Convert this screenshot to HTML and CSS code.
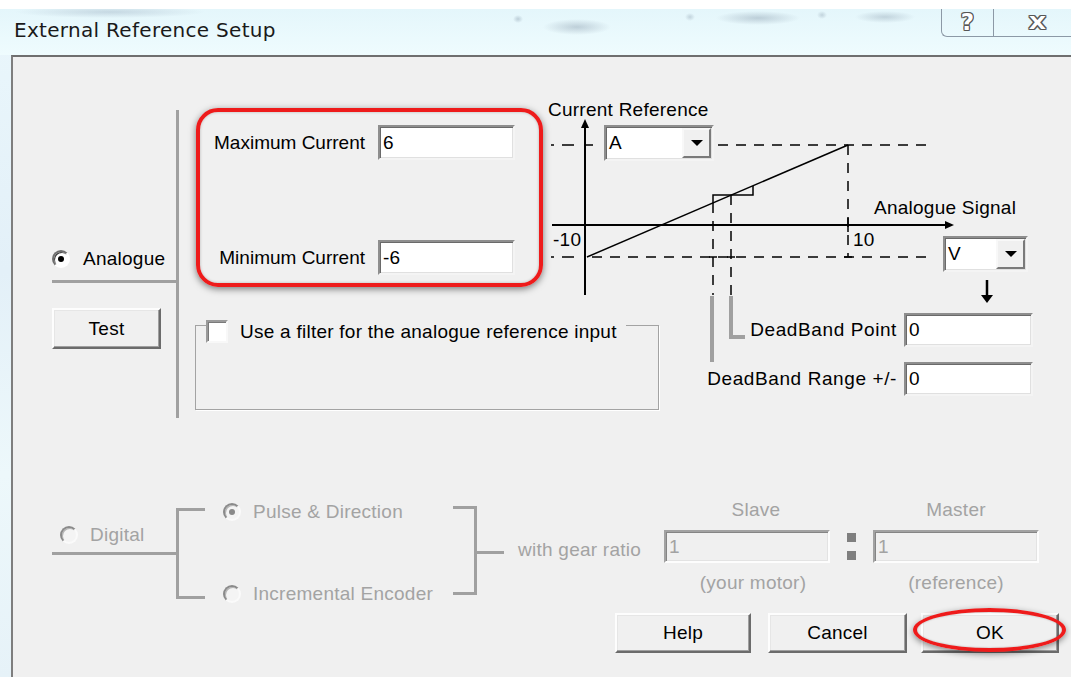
FILE: index.html
```html
<!DOCTYPE html>
<html lang="en">
<head>
<meta charset="utf-8">
<title>External Reference Setup</title>
<link rel="stylesheet" href="styles.css">
</head>
<body>
<div class="screen">
  <header class="titlebar">
    <h1 class="title">External Reference Setup</h1>
    <div class="caption-buttons">
      <span class="cap cap-help">?</span>
      <span class="cap cap-close">X</span>
    </div>
  </header>

  <main class="dialog">
    <section class="analogue">
      <div class="mode">
        <div class="choice"><span class="radio on"></span><span>Analogue</span></div>
        <div class="hbar"></div>
        <button class="btn btn-test" type="button">Test</button>
      </div>
      <div class="vbar"></div>

      <div class="analogue-body">
        <div class="top-row">
          <div class="limits">
            <span class="lbl">Maximum Current</span><span class="field">6</span>
            <span class="lbl">Minimum Current</span><span class="field">-6</span>
          </div>

          <div class="chart">
            <svg class="chart-lines" width="490" height="270" viewBox="0 0 490 270">
              <g fill="none" stroke="#000">
                <path d="M37 26V195" stroke-width="2"/>
                <path d="M4 125H399" stroke-width="2"/>
                <path d="M39 157L300 45" stroke-width="1.5"/>
                <path d="M165 103V95H205V86" stroke-width="1.5"/>
                <path d="M3 45H6M14 45H26M37 45H45M3 157H6M14 157H26" stroke-width="1.5"/>
                <path d="M300 118V132M296 157H304M161 157H169M179 157H187" stroke-width="1.5"/>
              </g>
              <g fill="none" stroke="#000" stroke-width="1.5" stroke-dasharray="10 8">
                <path d="M170 45H382"/>
                <path d="M44 157H382"/>
                <path d="M300 45V157"/>
                <path d="M165 103V195"/>
                <path d="M183 95V195"/>
              </g>
              <polygon points="37,19 33,28 41,28" fill="#000"/>
              <polygon points="406,125 397,121 397,129" fill="#000"/>
              <g fill="none" stroke="#a0a0a0" stroke-width="4">
                <path d="M164 196V262"/>
                <path d="M183 196V237H197"/>
              </g>
              <path d="M439 180V197" stroke="#000" stroke-width="2.5"/>
              <polygon points="433,195 445,195 439,203" fill="#000"/>
            </svg>
            <span class="chart-text cr-label">Current Reference</span>
            <span class="chart-text min-label">-10</span>
            <span class="chart-text max-label">10</span>
            <span class="chart-text signal-label">Analogue Signal</span>
            <div class="combo combo-a"><span class="value">A</span><span class="drop"><i></i></span></div>
            <div class="combo combo-v"><span class="value">V</span><span class="drop"><i></i></span></div>
          </div>
        </div>

        <div class="bottom-row">
          <div class="filter">
            <div class="filter-title"><span class="check"></span><span>Use a filter for the analogue reference input</span></div>
          </div>
          <div class="deadband">
            <span class="lbl">DeadBand Point</span><span class="field">0</span>
            <span class="lbl">DeadBand Range +/-</span><span class="field">0</span>
          </div>
        </div>
      </div>
    </section>

    <section class="digital">
      <div class="mode mode-digital">
        <div class="choice choice-digital"><span class="radio dim"></span><span class="muted">Digital</span></div>
        <div class="hbar"></div>
      </div>
      <div class="bracket-l"></div>
      <div class="options">
        <div class="choice"><span class="radio dim on"></span><span class="muted">Pulse &amp; Direction</span></div>
        <div class="choice"><span class="radio dim"></span><span class="muted">Incremental Encoder</span></div>
      </div>
      <div class="bracket-r"></div>
      <div class="connector"></div>
      <div class="gear-label muted">with gear ratio</div>
      <div class="gear">
        <span class="gear-head muted slave-head">Slave</span>
        <span></span>
        <span class="gear-head muted">Master</span>
        <span class="field field-off">1</span>
        <span class="colon"><i></i><i></i></span>
        <span class="field field-off">1</span>
        <span class="gear-head muted slave-sub">(your motor)</span>
        <span></span>
        <span class="gear-head muted">(reference)</span>
      </div>
    </section>

    <footer class="actions">
      <button class="btn btn-help" type="button">Help</button>
      <button class="btn btn-cancel" type="button">Cancel</button>
      <button class="btn btn-ok" type="button">OK<span class="ok-mark"></span></button>
    </footer>
  </main>
</div>
</body>
</html>
```

FILE: styles.css
```css
* {
  box-sizing: border-box;
}

html,
body {
  margin: 0;
  padding: 0;
}

body {
  width: 1071px;
  height: 677px;
  overflow: hidden;
  background: #fff;
  font-family: "Liberation Sans", Arial, sans-serif;
  font-size: 19px;
  letter-spacing: 0.25px;
  color: #000;
}

.screen {
  width: 1071px;
  height: 677px;
  padding-top: 9px;
  display: flex;
  flex-direction: column;
  background:
    linear-gradient(#fff 0 9px, transparent 9px),
    linear-gradient(180deg, #eaf7fc 0%, #e3f0f8 40%, #edf8fb 70%, #e6f2f8 100%);
}

/* ---------- caption bar ---------- */
.titlebar {
  flex: none;
  height: 46px;
  display: flex;
  align-items: flex-start;
  background:
    radial-gradient(ellipse 95px 6px at 110px 3px, rgba(140, 160, 180, 0.35), transparent),
    radial-gradient(ellipse 34px 8px at 577px 18px, rgba(110, 130, 150, 0.35), transparent),
    radial-gradient(ellipse 5px 4px at 518px 10px, rgba(110, 130, 150, 0.35), transparent),
    radial-gradient(ellipse 5px 4px at 690px 8px, rgba(110, 130, 150, 0.3), transparent),
    radial-gradient(ellipse 42px 7px at 758px 9px, rgba(110, 130, 150, 0.35), transparent),
    radial-gradient(ellipse 5px 4px at 822px 6px, rgba(110, 130, 150, 0.3), transparent),
    radial-gradient(ellipse 30px 6px at 885px 8px, rgba(110, 130, 150, 0.3), transparent),
    linear-gradient(180deg, #e4f6fb, #effcfe);
}

.title {
  margin: 0;
  padding: 9px 0 0 14px;
  font: 400 20px/24px "DejaVu Sans", "Noto Sans", sans-serif;
  letter-spacing: 0.3px;
  color: #1a1a1a;
}

.caption-buttons {
  margin-left: auto;
  margin-right: -10px;
  width: 140px;
  height: 28px;
  display: flex;
  border-left: 1px solid #8c99a6;
  border-bottom: 1px solid #8c99a6;
  border-bottom-left-radius: 6px;
}

.cap {
  display: flex;
  align-items: center;
  justify-content: center;
  font: 700 19px/1 "DejaVu Sans", sans-serif;
  color: #fff;
  text-shadow:
    1px 0 #555, -1px 0 #555, 0 1px #555, 0 -1px #555,
    1px 1px #666, -1px -1px #666, 1px -1px #666, -1px 1px #666;
}

.cap-help {
  width: 52px;
  font-size: 23px;
  border-right: 1px solid #8c99a6;
}

.cap-close {
  flex: 1;
  font-size: 18px;
  transform: scaleX(1.25);
}

/* ---------- dialog body ---------- */
.dialog {
  flex: 1;
  margin-left: 11px;
  border-left: 2px solid #7e7e7e;
  border-top: 2px solid #6f6f6f;
  background: #f0f0f0;
  display: flex;
  flex-direction: column;
}

.muted {
  color: #a3a3a3;
}

.choice {
  display: flex;
  align-items: center;
  gap: 13px;
  height: 23px;
  line-height: 22px;
  white-space: nowrap;
}

.radio {
  position: relative;
  flex: none;
  width: 18px;
  height: 18px;
  border-radius: 50%;
  border: 2px solid;
  border-color: #6e6e6e #ffffff #ffffff #6e6e6e;
  background: #fff;
  box-shadow: inset 1px 1px #404040;
}

.radio.on::after {
  content: "";
  position: absolute;
  left: 4px;
  top: 4px;
  width: 6px;
  height: 6px;
  border-radius: 50%;
  background: #000;
}

.radio.dim {
  border-color: #8a8a8a #fafafa #fafafa #8a8a8a;
  background: #f4f4f4;
  box-shadow: inset 1px 1px #b4b4b4;
}

.radio.dim.on::after {
  background: #8a8a8a;
}

.hbar {
  width: 124px;
  height: 3px;
  background: #a0a0a0;
}

.btn {
  font: inherit;
  letter-spacing: inherit;
  color: #000;
  height: 40px;
  padding: 0;
  background: #f0f0f0;
  border: 2px solid;
  border-color: #fdfdfd #6b6b6b #6b6b6b #fdfdfd;
  box-shadow: inset -1px -1px #a0a0a0, inset 1px 1px #e6e6e6;
}

.field {
  display: flex;
  align-items: center;
  height: 35px;
  padding-left: 3px;
  background: #fff;
  border: 2px solid;
  border-color: #8e8e8e #f4f4f4 #f4f4f4 #8e8e8e;
  box-shadow: inset 1px 1px #6a6a6a, inset -1px -1px #e0e0e0;
  line-height: 22px;
}

.field-off {
  height: 33px;
  background: #f0f0f0;
  color: #a3a3a3;
  border-color: #a2a2a2 #fdfdfd #fdfdfd #a2a2a2;
  box-shadow: inset 1px 1px #858585, inset -1px -1px #e3e3e3;
}

.lbl {
  text-align: right;
  white-space: nowrap;
  line-height: 22px;
}

/* ---------- analogue block ---------- */
.analogue {
  flex: none;
  display: flex;
  height: 318px;
  margin-top: 43px;
  padding-left: 39px;
}

.mode {
  flex: none;
  width: 124px;
  display: flex;
  flex-direction: column;
  align-items: flex-start;
  padding-top: 147px;
}

.mode .hbar {
  margin-top: 10px;
}

.btn-test {
  margin-top: 25px;
  width: 109px;
  height: 41px;
}

.vbar {
  flex: none;
  width: 3px;
  height: 308px;
  margin-top: 10px;
  background: #a0a0a0;
}

.analogue-body {
  display: flex;
  flex-direction: column;
}

.top-row {
  display: flex;
  height: 200px;
}

.limits {
  flex: none;
  width: 347px;
  height: 179px;
  margin: 8px 0 0 17px;
  padding: 13px 24px 0 0;
  border: 4px solid #ee1b1b;
  border-radius: 22px;
  box-shadow: 0 2px 7px rgba(0, 0, 0, 0.5), inset 0 0 3px rgba(0, 0, 0, 0.25);
  display: grid;
  grid-template-columns: 1fr 137px;
  column-gap: 13px;
  row-gap: 80px;
  align-content: start;
  align-items: center;
}

.limits .lbl {
  letter-spacing: 0;
}

/* response curve: axes, dead band and unit selectors */
.chart {
  position: relative;
  flex: none;
  width: 490px;
  height: 200px;
  margin-left: 5px;
}

.chart-lines {
  position: absolute;
  left: 0;
  top: 0;
  overflow: visible;
}

.chart-text {
  position: absolute;
  line-height: 20px;
  white-space: nowrap;
}

.cr-label {
  left: 0;
  top: 0;
}

.min-label {
  left: 5px;
  top: 130px;
}

.max-label {
  left: 305px;
  top: 130px;
}

.signal-label {
  left: 326px;
  top: 98px;
}

.combo {
  position: absolute;
  display: flex;
  height: 36px;
  background: #fff;
  border: 2px solid;
  border-color: #8e8e8e #f4f4f4 #f4f4f4 #8e8e8e;
  box-shadow: inset 1px 1px #6a6a6a, inset -1px -1px #e0e0e0;
}

.combo .value {
  flex: 1;
  padding-left: 3px;
  line-height: 32px;
}

.combo .drop {
  flex: none;
  width: 29px;
  margin: 1px 1px 1px 0;
  display: flex;
  align-items: center;
  justify-content: center;
  background: #f0f0f0;
  border: 2px solid;
  border-color: #f8f8f8 #7a7a7a #7a7a7a #f8f8f8;
}

.combo .drop i {
  width: 0;
  height: 0;
  border-left: 6px solid transparent;
  border-right: 6px solid transparent;
  border-top: 6px solid #000;
}

.combo-a {
  left: 56px;
  top: 25px;
  width: 110px;
}

.combo-v {
  left: 395px;
  top: 136px;
  width: 85px;
}

.bottom-row {
  display: flex;
  margin-top: 13px;
}

.filter {
  flex: none;
  width: 464px;
  height: 85px;
  margin: 12px 0 0 16px;
  border: 1px solid #a3a3a3;
  box-shadow: 1px 1px #fff;
}

.filter-title {
  display: inline-flex;
  align-items: center;
  gap: 12px;
  height: 23px;
  margin: -7px 0 0 10px;
  padding-right: 9px;
  background: #f0f0f0;
  line-height: 22px;
  white-space: nowrap;
}

.check {
  flex: none;
  width: 22px;
  height: 23px;
  background: #fff;
  border: 2px solid;
  border-color: #9a9a9a #f8f8f8 #f8f8f8 #9a9a9a;
  box-shadow: inset 1px 1px #7a7a7a;
}

.deadband {
  flex: none;
  margin-left: 47px;
  height: max-content;
  display: grid;
  grid-template-columns: 191px 129px;
  column-gap: 7px;
  row-gap: 15px;
  align-items: center;
}

.deadband .lbl {
  letter-spacing: 0.6px;
}

.deadband .field {
  height: 34px;
}

/* ---------- digital block ---------- */
.digital {
  flex: none;
  display: flex;
  align-items: flex-start;
  height: 100px;
  margin-top: 81px;
  padding-left: 39px;
}

.mode-digital {
  padding-top: 24px;
}

.mode-digital .hbar {
  margin-top: 6px;
}

.choice-digital {
  padding-left: 8px;
  gap: 12px;
}

.bracket-l {
  flex: none;
  width: 29px;
  height: 91px;
  margin-top: 9px;
  border: 3px solid #a0a0a0;
  border-right: none;
}

.options {
  flex: none;
  width: 248px;
  padding: 1px 0 0 18px;
  display: flex;
  flex-direction: column;
  gap: 59px;
}

.options .choice {
  gap: 12px;
}

.bracket-r {
  flex: none;
  width: 24px;
  height: 89px;
  margin-top: 7px;
  border: 3px solid #a0a0a0;
  border-left: none;
}

.connector {
  flex: none;
  width: 27px;
  height: 3px;
  margin-top: 52px;
  background: #a0a0a0;
}

.gear-label {
  flex: none;
  width: 160px;
  padding-left: 14px;
  margin-top: 40px;
  line-height: 22px;
  white-space: nowrap;
}

.gear {
  flex: none;
  display: grid;
  grid-template-columns: 166px 43px 166px;
  grid-template-rows: 22px 33px 22px;
  row-gap: 9px;
}

.gear-head {
  text-align: center;
  line-height: 22px;
  white-space: nowrap;
}

.slave-head {
  padding-left: 18px;
}

.slave-sub {
  padding-left: 12px;
}

.colon {
  display: flex;
  flex-direction: column;
  align-items: center;
  justify-content: center;
  gap: 9px;
}

.colon i {
  width: 9px;
  height: 9px;
  background: #7f7f7f;
}

/* ---------- command buttons ---------- */
.actions {
  flex: none;
  display: flex;
  justify-content: flex-end;
  margin-top: 14px;
  padding-right: 12px;
}

.btn-help {
  width: 136px;
  margin-right: 17px;
}

.btn-cancel {
  width: 139px;
  margin-right: 14px;
}

.btn-ok {
  position: relative;
  width: 138px;
}

.ok-mark {
  position: absolute;
  left: -10px;
  top: -7px;
  width: 153px;
  height: 44px;
  border: 4px solid #ee1b1b;
  border-radius: 50%;
  box-shadow: 0 2px 6px rgba(0, 0, 0, 0.45), inset 0 0 2px rgba(0, 0, 0, 0.3);
  pointer-events: none;
}
```
